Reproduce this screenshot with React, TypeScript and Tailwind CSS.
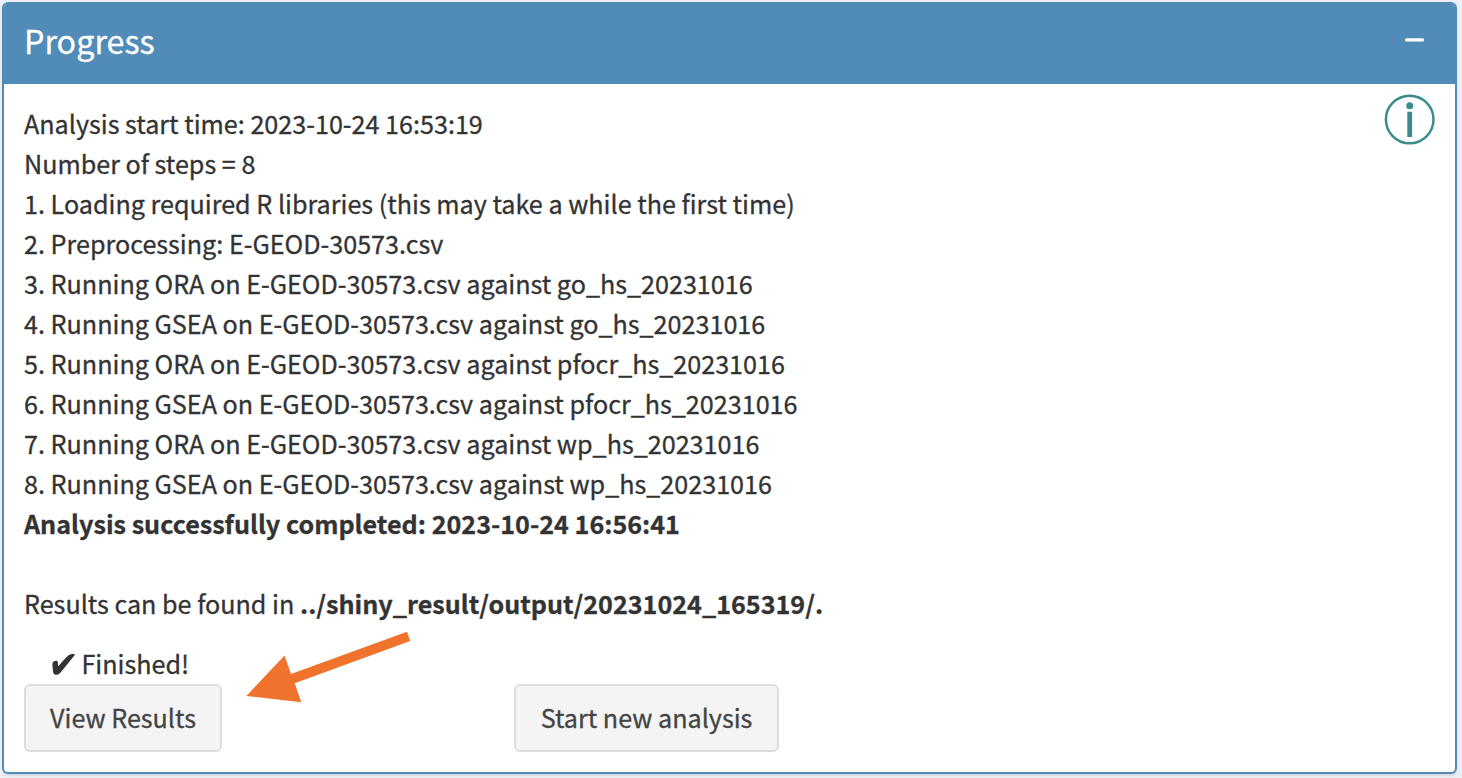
const steps = [
  "Analysis start time: 2023-10-24 16:53:19",
  "Number of steps = 8",
  "1. Loading required R libraries (this may take a while the first time)",
  "2. Preprocessing: E-GEOD-30573.csv",
  "3. Running ORA on E-GEOD-30573.csv against go_hs_20231016",
  "4. Running GSEA on E-GEOD-30573.csv against go_hs_20231016",
  "5. Running ORA on E-GEOD-30573.csv against pfocr_hs_20231016",
  "6. Running GSEA on E-GEOD-30573.csv against pfocr_hs_20231016",
  "7. Running ORA on E-GEOD-30573.csv against wp_hs_20231016",
  "8. Running GSEA on E-GEOD-30573.csv against wp_hs_20231016",
];

function Header() {
  return (
    <header className="flex h-[82px] items-center justify-between bg-[#518cb8] pr-[31px] pl-[20px] text-white">
      <h3 className="pb-[6px] text-[32.3px] leading-[40px] font-normal">Progress</h3>
      <svg className="mb-[6px] h-[6px] w-[19px]" viewBox="0 0 19 6" aria-label="Collapse">
        <rect x="0" y="1.2" width="19" height="3.4" rx="1.5" fill="#ffffff" />
      </svg>
    </header>
  );
}

function InfoIcon() {
  return (
    <svg className="absolute top-[10px] right-[19px] h-[52px] w-[52px]" viewBox="0 0 52 52" fill="none">
      <circle cx="25.7" cy="25.5" r="23.8" stroke="#3a8c8a" strokeWidth="2.5" />
      <circle cx="25.7" cy="11.7" r="3.5" fill="#3a8c8a" />
      <rect x="23.3" y="17.7" width="4.8" height="25.3" fill="#3a8c8a" />
    </svg>
  );
}

function Arrow() {
  return (
    <svg className="absolute top-[536px] left-[226px] h-[90px] w-[200px]" viewBox="230 620 200 90">
      <path d="M246.3 696 L284.5 655.5 L291 674 L407 631.8 L410.2 641 L294.7 683.2 L301.3 702.2 Z" fill="#ef732d" />
    </svg>
  );
}

function Action({ label, className }: { label: string; className: string }) {
  return (
    <button
      className={`h-[68px] rounded-[6px] border-2 border-[#dddddd] bg-[#f4f4f4] pb-[2px] text-center text-[#444444] ${className}`}
    >
      {label}
    </button>
  );
}

export default function App() {
  return (
    <div className="h-[778px] w-[1462px] overflow-hidden bg-[#ecf0f5] pt-[2px] pl-[2px] font-['Noto_Sans_CJK_SC',sans-serif] text-[25.15px] leading-[40px] text-[#333333] [-webkit-text-stroke:0.3px]">
      <section className="h-[772px] w-[1455px] overflow-hidden rounded-[6px] border-2 border-t-0 border-[#518cb8] bg-white shadow-[0_2px_2px_rgba(0,0,0,0.1)]">
        <Header />
        <div className="relative px-[20px] pt-[19px]">
          <InfoIcon />
          <div className="whitespace-nowrap">
            {steps.map((s) => (
              <p key={s}>{s}</p>
            ))}
            <p className="font-bold">Analysis successfully completed: 2023-10-24 16:56:41</p>
            <p className="mt-[40px]">
              Results can be found in <b className="font-bold">../shiny_result/output/20231024_165319/.</b>
            </p>
          </div>
          <div className="mt-[20px] mb-[1px] flex items-center pl-[28.4px]">
            <svg className="mt-[3px] mr-[6px] h-[21px] w-[23px]" viewBox="0 0 23 21">
              <path
                d="M0.5 9.2 C0.8 7.8 2.4 6.8 4 6.8 C6.4 6.8 5.9 9.5 6.2 12.2 C9.5 8.8 13.2 4.3 16.3 1.6 C17.9 0.2 20.2 0 22.9 0.1 C22.8 1 22.3 1.6 21.6 2.4 L9 18 C7.3 20.2 5.5 20.9 3.7 20.8 C1.2 20.7 0.9 17.5 0.8 15 C0.7 13 0.1 10.8 0.5 9.2 Z"
                fill="#333333"
              />
            </svg>
            <span>Finished!</span>
          </div>
          <div className="flex gap-[292px]">
            <Action label="View Results" className="w-[198px]" />
            <Action label="Start new analysis" className="w-[265px]" />
          </div>
          <Arrow />
        </div>
      </section>
    </div>
  );
}
